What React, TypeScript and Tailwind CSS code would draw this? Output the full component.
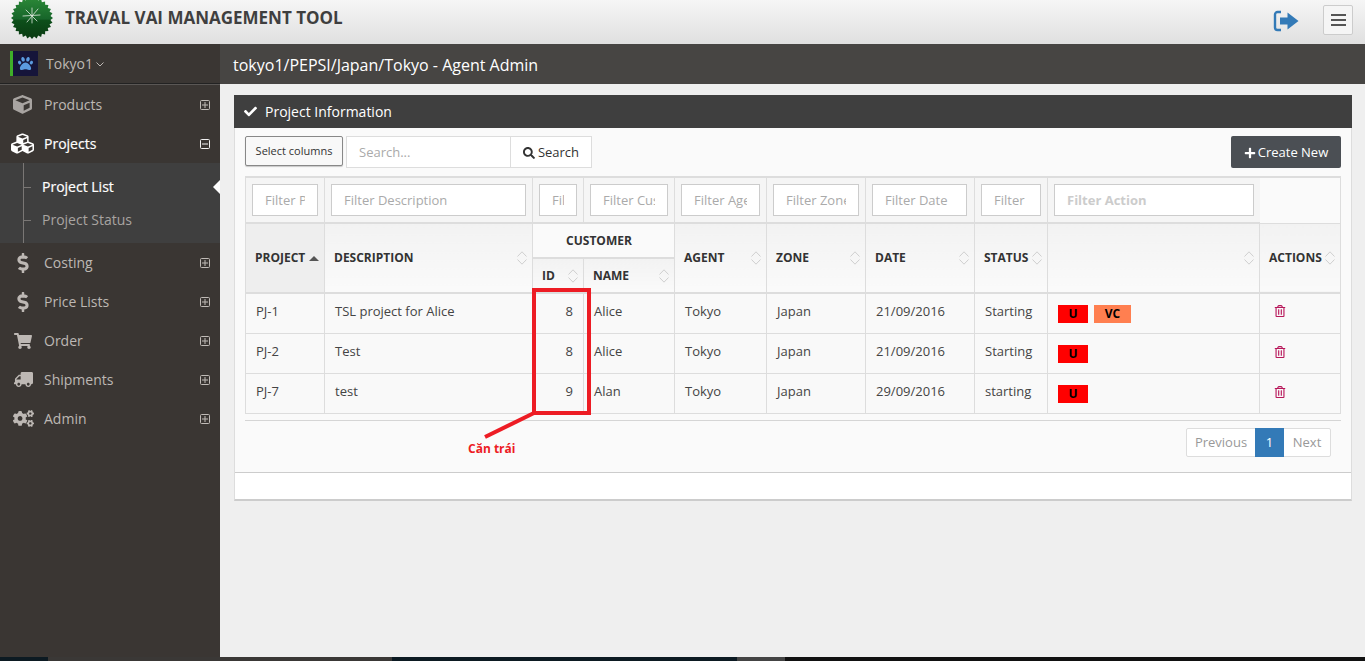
import React from "react";
import { FaCube, FaCubes, FaDollarSign, FaShoppingCart, FaTruck, FaCogs, FaCheck, FaSearch, FaPlus, FaRegTrashAlt, FaPaw } from "react-icons/fa";

function Logo() {
  const pts: string[] = [];
  const n = 28;
  for (let i = 0; i < n * 2; i++) {
    const r = i % 2 === 0 ? 21 : 18.6;
    const a = (i * Math.PI) / n;
    pts.push(`${21 + r * Math.cos(a)},${21 + r * Math.sin(a)}`);
  }
  return (
    <svg width="42" height="42" viewBox="0 0 42 42" className="shrink-0">
      <defs>
        <linearGradient id="lg" x1="0" y1="0" x2="0" y2="1">
          <stop offset="0" stopColor="#2c8a38" />
          <stop offset="0.52" stopColor="#17652a" />
          <stop offset="0.56" stopColor="#0d4f1a" />
          <stop offset="1" stopColor="#0a3a12" />
        </linearGradient>
      </defs>
      <polygon points={pts.join(" ")} fill="url(#lg)" />
      <g stroke="#dfe9df" strokeWidth="0.8" strokeLinecap="round">
        <line x1="21" y1="11" x2="21" y2="26" />
        <line x1="12" y1="19" x2="29" y2="18" />
        <line x1="15" y1="13" x2="26" y2="24" />
        <line x1="27" y1="12" x2="16" y2="25" />
      </g>
    </svg>
  );
}

function SignOut() {
  return (
    <svg width="26" height="22" viewBox="0 0 26 22" className="text-[#337ab7] self-start mt-[10px]">
      <path d="M8 2H4.500A2.500 2.500 0 0 0 2 4.500V17.500A2.500 2.500 0 0 0 4.500 20H8" fill="none" stroke="currentColor" strokeWidth="2.400" />
      <path d="M7 7.500H14.500V2.500L25.500 11L14.500 19.500V14.500H7Z" fill="currentColor" />
    </svg>
  );
}

function BoxToggle({ open, bright }: { open?: boolean; bright?: boolean }) {
  const c = bright ? "#f2f2f2" : "#c0bbb7";
  return (
    <svg width="10" height="10" viewBox="0 0 10 10" className="shrink-0">
      <rect x="0.500" y="0.500" width="9" height="9" rx="1" fill="none" stroke={c} />
      <line x1="2" y1="5" x2="8" y2="5" stroke={c} />
      {!open && <line x1="5" y1="2" x2="5" y2="8" stroke={c} />}
    </svg>
  );
}

function Sort() {
  return (
    <svg width="10" height="14" viewBox="0 0 10 14" className="shrink-0" fill="none" stroke="#cfcfcf">
      <polyline points="0.500,5.500 5,0.800 9.500,5.500" />
      <polyline points="0.500,8.500 5,13.200 9.500,8.500" />
    </svg>
  );
}

function NavItem({ icon, label, active }: { icon: React.ReactNode; label: string; active?: boolean }) {
  return (
    <div className={`h-[39px] flex items-center pl-[12px] pr-[10px] ${active ? "text-white font-medium [-webkit-text-stroke:0.2px_white]" : "text-[#bdb8b4]"}`}>
      <span className="w-[22px] flex justify-center">{icon}</span>
      <span className="ml-[10px] flex-1 text-[14px]">{label}</span>
      <BoxToggle open={active} bright={active} />
    </div>
  );
}

function SubItem({ label, active, h }: { label: string; active?: boolean; h: string }) {
  return (
    <div className={`relative flex items-center pl-[42px] text-[14px] ${h} ${active ? "text-white font-medium [-webkit-text-stroke:0.2px_white]" : "text-[#a8a4a1]"}`}>
      <span className="absolute left-[23px] top-1/2 w-[8px] h-px bg-[#7a7775]" />
      {label}
      {active && (
        <span className="absolute right-0 top-1/2 -translate-y-1/2 border-y-[7px] border-y-transparent border-r-[7px] border-r-white" />
      )}
    </div>
  );
}

function Sidebar() {
  return (
    <aside className="w-[220px] shrink-0 bg-[#3a3633] flex flex-col">
      <div className="h-[40px] flex items-center pl-[10px] border-b border-b-[#222] shadow-[0_1px_0_#5a5755]">
        <div className="w-[28px] h-[25px] bg-[#16153a] border-l-[3px] border-l-[#3fae29] flex items-center justify-center">
          <FaPaw className="text-[#5b9be0] text-[15px]" />
        </div>
        <span className="ml-[8px] text-[14px] text-[#bdb8b4]">Tokyo1</span>
        <svg width="8" height="5" viewBox="0 0 8 5" className="ml-[3px] mt-[1px]" fill="none" stroke="#bdb8b4">
          <polyline points="0.500,0.500 4,4 7.500,0.500" />
        </svg>
      </div>
      <div className="h-px" />
      <NavItem label="Products" icon={<FaCube className="text-[19px] text-[#a8a4a1] -ml-[1px]" />} />
      <NavItem label="Projects" active icon={<FaCubes className="text-[27px] text-white -ml-[1px]" />} />
      <div className="relative bg-[#3f3f3f] h-[80px] flex flex-col pt-[7px]">
        <span className="absolute left-[23px] top-0 bottom-0 w-px bg-[#7a7775]" />
        <SubItem label="Project List" active h="h-[33px]" />
        <SubItem label="Project Status" h="h-[33px]" />
      </div>
      <NavItem label="Costing" icon={<FaDollarSign className="text-[20px] text-[#bdb8b4]" />} />
      <NavItem label="Price Lists" icon={<FaDollarSign className="text-[20px] text-[#bdb8b4]" />} />
      <NavItem label="Order" icon={<FaShoppingCart className="text-[18px] text-[#bdb8b4]" />} />
      <NavItem label="Shipments" icon={<FaTruck className="text-[19px] text-[#bdb8b4] -scale-x-100" />} />
      <NavItem label="Admin" icon={<FaCogs className="text-[21px] text-[#bdb8b4]" />} />
    </aside>
  );
}

const widths = [79, 208, 51, 91, 92, 99, 109, 73, 212, 81];
const filters = ["Filter Project", "Filter Description", "Filter ID", "Filter Customer", "Filter Agent", "Filter Zone", "Filter Date", "Filter"];
const rows = [
  { p: "PJ-1", d: "TSL project for Alice", id: 8, n: "Alice", da: "21/09/2016", s: "Starting", vc: true, pb: "pb-[4px]", mt: "mt-[6px]" },
  { p: "PJ-2", d: "Test", id: 8, n: "Alice", da: "21/09/2016", s: "Starting", vc: false, pb: "pb-[2px]", mt: "mt-[4px]" },
  { p: "PJ-7", d: "test", id: 9, n: "Alan", da: "29/09/2016", s: "starting", vc: false, pb: "pb-[2px]", mt: "mt-[4px]" },
];

const thCell = "border border-[#ddd] border-b-2 align-middle pl-[9px] pr-[5px] text-[12px] font-bold text-[#333] text-left bg-gradient-to-b from-[#f2f2f2] to-[#fafafa]";

function Head({ label, rowSpan = 2 }: { label: string; rowSpan?: number }) {
  return (
    <th rowSpan={rowSpan} className={thCell}>
      <div className="flex items-center justify-between">
        <span>{label}</span>
        <Sort />
      </div>
    </th>
  );
}

function DataTable() {
  return (
    <table className="table-fixed w-[1096px] border-collapse border-t-2 border-t-[#ddd] text-[13px] text-[#444]">
      <colgroup>
        {widths.map((w, i) => (
          <col key={i} style={{ width: w }} />
        ))}
      </colgroup>
      <thead>
        <tr className="h-[46px]">
          {filters.map((f) => (
            <td key={f} className={`border border-[#ddd] border-b-2 pl-[6px] bg-[#f5f5f5] ${f === "Filter Date" ? "pr-[7px]" : "pr-[6px]"}`}>
              <input readOnly placeholder={f} className="w-full h-[32px] bg-white border border-[#ccc] px-[12px] text-[13px] placeholder:text-[#aaa] outline-none" />
            </td>
          ))}
          <td className="border border-[#ddd] border-b-2 border-r-0 pl-[6px] pr-[6px] bg-[#f5f5f5]">
            <input readOnly placeholder="Filter Action" className="w-full h-[32px] bg-white border border-[#ccc] px-[12px] text-[13px] font-bold placeholder:text-[#ccc] outline-none" />
          </td>
          <td className="border border-[#ddd] border-l-0 bg-[#fafafa]" />
        </tr>
        <tr className="h-[35px]">
          <th rowSpan={2} className={`${thCell} bg-none bg-[#eeeeee]`}>
            <div className="flex items-center gap-[4px]">
              <span>PROJECT</span>
              <span className="border-x-[5px] border-x-transparent border-b-[5px] border-b-[#555]" />
            </div>
          </th>
          <Head label="DESCRIPTION" />
          <th colSpan={2} className="border border-[#ddd] border-b-2 pr-[9px] pt-[1px] text-center text-[12px] font-bold text-[#333] bg-[#fafafa]">CUSTOMER</th>
          <Head label="AGENT" />
          <Head label="ZONE" />
          <Head label="DATE" />
          <Head label="STATUS" />
          <Head label="" />
          <Head label="ACTIONS" />
        </tr>
        <tr className="h-[35px]">
          <Head label="ID" rowSpan={1} />
          <Head label="NAME" rowSpan={1} />
        </tr>
      </thead>
      <tbody className="bg-[#f9f9f9]">
        {rows.map((r) => {
          const td = `border border-[#ddd] px-[10px] ${r.pb}`;
          return (
            <tr key={r.p} className="h-[40px]">
              <td className={td}>{r.p}</td>
              <td className={td}>{r.d}</td>
              <td className={`${td} text-right`}>{r.id}</td>
              <td className={td}>{r.n}</td>
              <td className={td}>Tokyo</td>
              <td className={td}>Japan</td>
              <td className={td}>{r.da}</td>
              <td className={td}>{r.s}</td>
              <td className={td}>
                <div className={`flex gap-[6px] ${r.mt}`}>
                  <span className="w-[30px] h-[18px] bg-[#ff0000] text-black text-[12px] font-bold flex items-center justify-center">U</span>
                  {r.vc && <span className="w-[37px] h-[18px] bg-[#ff7f50] text-black text-[12px] font-bold flex items-center justify-center">VC</span>}
                </div>
              </td>
              <td className={`border border-[#ddd] pl-[14px] ${r.pb}`}>
                <FaRegTrashAlt className="text-[12px] text-[#b8175a]" />
              </td>
            </tr>
          );
        })}
      </tbody>
    </table>
  );
}

function Panel() {
  return (
    <section className="w-[1118px] h-[406px] bg-white border-r border-r-[#ddd] border-l border-l-[#ddd] border-b-2 border-b-[#ccc] flex flex-col">
      <div className="h-[33px] -mx-px bg-[#3f3f3f] text-white flex items-center pl-[10px] text-[14px]">
        <FaCheck className="text-[13px]" />
        <span className="ml-[8px]">Project Information</span>
      </div>
      <div className="h-[345px] bg-[#fafafa] border-b border-b-[#ccc] px-[10px] pt-[8px]">
        <div className="flex items-start justify-between h-[40px]">
          <div className="flex">
            <button className="w-[98px] h-[30px] bg-[#f8f8f8] border border-[#888] rounded-[2px] shadow-[0_1px_1px_rgba(0,0,0,.2)] text-[11px] text-[#333]">Select columns</button>
            <input readOnly placeholder="Search..." className="ml-[3px] w-[165px] h-[32px] bg-white border border-[#ddd] px-[12px] text-[13px] placeholder:text-[#aaa] outline-none" />
            <button className="-ml-px w-[82px] h-[32px] pt-px bg-white border border-[#ddd] text-[13px] text-[#333] flex items-center justify-center gap-[3px]">
              <FaSearch className="text-[12px]" />
              Search
            </button>
          </div>
          <button className="w-[110px] h-[32px] pt-px bg-[#4b4f54] rounded-[2px] text-white text-[13px] font-normal flex items-center justify-center gap-[2px]">
            <FaPlus className="text-[12px]" />
            Create New
          </button>
        </div>
        <DataTable />
        <div className="mt-[6px] border-t border-t-[#d5d5d5] flex justify-end pr-[10px] pt-[7px]">
          <div className="h-[29px] flex text-[13px] border border-[#ddd] rounded-[2px] bg-white text-[#999]">
            <span className="w-[68px] pt-[2px] flex items-center justify-center">Previous</span>
            <span className="w-[29px] -my-px pt-[2px] bg-[#337ab7] text-white flex items-center justify-center">1</span>
            <span className="w-[46px] pt-[2px] flex items-center justify-center">Next</span>
          </div>
        </div>
      </div>
    </section>
  );
}

export default function App() {
  return (
    <div className="relative w-[1365px] h-[661px] overflow-hidden flex flex-col bg-[#efefef] font-['Open_Sans',sans-serif]">
      <header className="h-[44px] shrink-0 flex items-center pl-[11px] pr-[12px] pb-[8px] bg-gradient-to-b from-[#f6f6f6] to-[#e0e0e0]">
        <Logo />
        <h1 className="ml-[12px] flex-1 text-[17px] font-bold text-[#3f3f3f]">TRAVAL VAI MANAGEMENT TOOL</h1>
        <SignOut />
        <button className="ml-[24px] self-start mt-[5px] w-[30px] h-[30px] bg-[#f5f5f5] border border-[#ccc] rounded-[2px] flex flex-col items-center justify-center gap-[3px]">
          <span className="w-[15px] h-[2px] bg-[#555]" />
          <span className="w-[15px] h-[2px] bg-[#555]" />
          <span className="w-[15px] h-[2px] bg-[#555]" />
        </button>
      </header>
      <div className="flex-1 min-h-0 flex">
        <Sidebar />
        <main className="flex-1 flex flex-col">
          <div className="h-[40px] pt-[2px] bg-[#474543] text-white text-[16px] flex items-center pl-[13px]">tokyo1/PEPSI/Japan/Tokyo - Agent Admin</div>
          <div className="pl-[14px] pt-[11px]">
            <Panel />
          </div>
        </main>
      </div>
      <footer className="h-[4px] shrink-0 flex">
        <div className="w-[48px] bg-[#0c1a22]" />
        <div className="w-[344px] bg-[#3a3836]" />
        <div className="w-[345px] bg-[#0c1a22]" />
        <div className="w-[48px] bg-[#444]" />
        <div className="flex-1 bg-[#111]" />
      </footer>

      {/* annotation drawn over the table */}
      <div className="absolute left-[532px] top-[288px] w-[59px] h-[127px] border-[4px] border-[#ed1c24]" />
      <svg className="absolute left-[480px] top-[410px]" width="60" height="32" viewBox="0 0 60 32">
        <line x1="54" y1="3" x2="5" y2="27" stroke="#ed1c24" strokeWidth="4" />
      </svg>
      <span className="absolute left-[468px] top-[440px] text-[12px] font-bold text-[#ed1c24]">Căn trái</span>
    </div>
  );
}
